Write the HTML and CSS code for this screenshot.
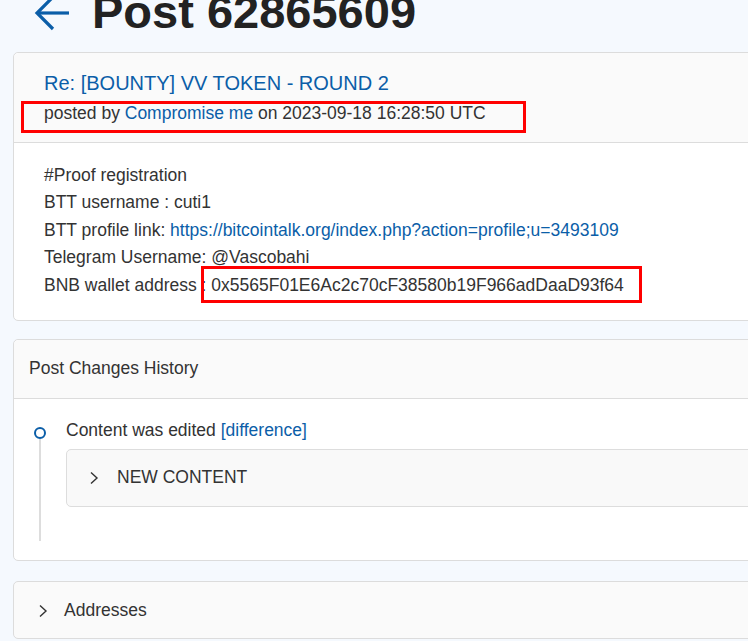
FILE: index.html
```html
<!DOCTYPE html>
<html lang="en">
<head>
    <meta charset="UTF-8">
    <meta name="viewport" content="width=device-width, initial-scale=1.0">
    <title>Post 62865609</title>
    <link rel="stylesheet" href="styles.css">
</head>
<body>
    <div class="page">
        <div class="page-head">
            <a href="#" class="back-link" aria-label="Back">
                <svg width="40" height="40" viewBox="0 0 40 40" fill="none" stroke="#0b5ea8" stroke-width="3.2">
                    <path d="M37 20H5"/>
                    <path d="M21 4L5 20l16 16"/>
                </svg>
            </a>
            <h1>Post 62865609</h1>
        </div>

        <div class="card">
            <div class="card-header post-header">
                <a href="#" class="post-title">Re: [BOUNTY] VV TOKEN - ROUND 2</a>
                <div class="post-meta">posted by <a href="#">Compromise me</a> on 2023-09-18 16:28:50 UTC</div>
            </div>
            <div class="card-body post-body">
                <div>#Proof registration</div>
                <div>BTT username : cuti1</div>
                <div>BTT profile link: <a href="#">https://bitcointalk.org/index.php?action=profile;u=3493109</a></div>
                <div>Telegram Username: @Vascobahi</div>
                <div>BNB wallet address : 0x5565F01E6Ac2c70cF38580b19F966adDaaD93f64</div>
            </div>
            <div class="mark mark-meta"></div>
            <div class="mark mark-wallet"></div>
        </div>

        <div class="card">
            <div class="card-header history-header">Post Changes History</div>
            <div class="card-body history-body">
                <div class="timeline-item">
                    <div class="timeline-marker">
                        <span class="dot"></span>
                        <span class="rail"></span>
                    </div>
                    <div class="timeline-content">
                        <div>Content was edited <a href="#">[difference]</a></div>
                        <div class="fold">
                            <svg class="chevron" width="10" height="14" viewBox="0 0 10 14" fill="none" stroke="#333" stroke-width="1.4">
                                <path d="M2 1.5l6 5.5-6 5.5"/>
                            </svg>
                            NEW CONTENT
                        </div>
                    </div>
                </div>
            </div>
        </div>

        <div class="card fold-card">
            <svg class="chevron" width="10" height="14" viewBox="0 0 10 14" fill="none" stroke="#333" stroke-width="1.4">
                <path d="M2 1.5l6 5.5-6 5.5"/>
            </svg>
            Addresses
        </div>
    </div>
</body>
</html>
```

FILE: styles.css
```css
html, body {
    overflow: hidden;
}
body {
    margin: 0;
    background-color: #f5f9fe;
    color: #333333;
    font-family: "Liberation Sans", Arial, sans-serif;
    font-size: 17.5px;
    line-height: 27.5px;
}
a {
    color: #0b5ea8;
    text-decoration: none;
}
.page {
    width: 1000px;
    padding-left: 13px;
}
.page-head {
    display: flex;
    align-items: center;
    gap: 20px;
    margin-top: -12px;
    margin-bottom: 17px;
    padding-left: 19px;
    height: 47px;
}
.back-link {
    display: flex;
    margin-top: 3px;
}
h1 {
    margin: 0;
    font-size: 47px;
    line-height: 47px;
    font-weight: bold;
    color: #222222;
}
.card {
    position: relative;
    background-color: #ffffff;
    border: 1px solid #dcdcdc;
    border-radius: 5px;
    margin-bottom: 18px;
}
.card-header {
    background-color: #fafafa;
    border-bottom: 1px solid #dcdcdc;
    border-radius: 5px 5px 0 0;
}
.post-header {
    padding: 15px 30px 14px;
}
.post-title {
    display: block;
    font-size: 20px;
    line-height: 30px;
}
.post-meta {
    margin-top: 2px;
}
.post-body {
    padding: 19px 30px 21px;
}
.mark {
    position: absolute;
    border: 3px solid #ff0000;
    box-sizing: border-box;
}
.mark-meta {
    left: 7px;
    top: 48px;
    width: 505px;
    height: 32px;
}
.mark-wallet {
    left: 187px;
    top: 213px;
    width: 441px;
    height: 37px;
}
.history-header {
    padding: 15px 15px 15px;
}
.history-body {
    padding: 18px 15px 19px;
}
.timeline-item {
    display: flex;
    gap: 15px;
}
.timeline-marker {
    width: 22px;
    display: flex;
    flex-direction: column;
    align-items: center;
    padding-top: 10px;
}
.dot {
    width: 12px;
    height: 12px;
    border: 2px solid #0b5ea8;
    border-radius: 50%;
    box-sizing: border-box;
}
.rail {
    flex: 1;
    width: 2px;
    background-color: #dddddd;
}
.timeline-content {
    flex: 1;
    padding-bottom: 34px;
}
.fold {
    display: flex;
    align-items: center;
    gap: 18px;
    margin-top: 5px;
    height: 58px;
    box-sizing: border-box;
    padding-left: 22px;
    background-color: #f9f9f9;
    border: 1px solid #dddddd;
    border-radius: 5px;
}
.fold-card {
    display: flex;
    align-items: center;
    gap: 16px;
    height: 58px;
    box-sizing: border-box;
    margin-top: 20px;
    padding-left: 24px;
    padding-top: 2px;
    background-color: #fafafa;
}
```
